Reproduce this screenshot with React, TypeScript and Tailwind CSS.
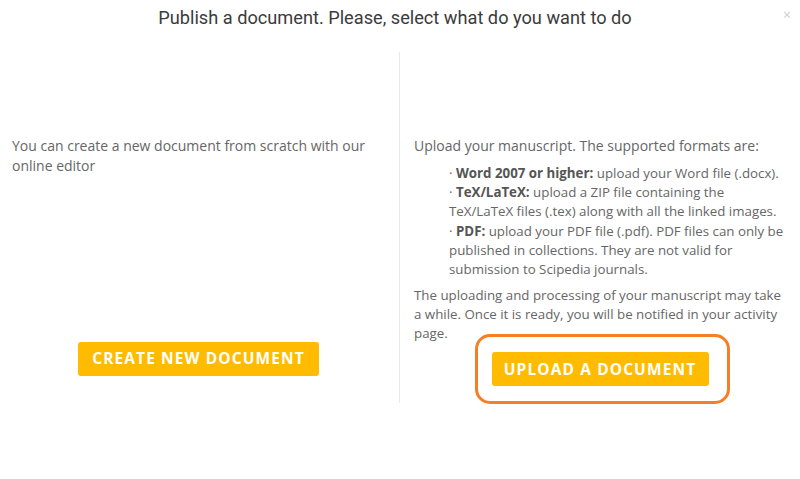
const body = { fontFamily: '"Open Sans", "Liberation Sans", sans-serif' }
const heading = { fontFamily: 'Roboto, "Open Sans", sans-serif' }

const formats = [
  { label: "Word 2007 or higher:", text: "upload your Word file (.docx)." },
  { label: "TeX/LaTeX:", text: "upload a ZIP file containing the TeX/LaTeX files (.tex) along with all the linked images." },
  {
    label: "PDF:",
    text: "upload your PDF file (.pdf). PDF files can only be published in collections. They are not valid for submission to Scipedia journals.",
  },
]

const ActionButton = ({ children, className = "" }: { children: React.ReactNode; className?: string }) => (
  <button
    type="button"
    className={`h-[34px] rounded-[3px] bg-[#ffbb00] text-[15.5px] font-bold uppercase tracking-[1.1px] text-white ${className}`}
    style={body}
  >
    {children}
  </button>
)

export default function App() {
  return (
    <div className="w-[800px] h-[479px] bg-white text-[14px] text-[#666]" style={body}>
      <div className="relative flex h-[52px] items-start justify-center pt-[4px]">
        <h1 className="text-[18.2px] font-normal text-[#3b3b3b] -ml-[10px]" style={heading}>
          Publish a document. Please, select what do you want to do
        </h1>
        <button type="button" className="absolute right-[9px] top-[8px] text-[14px] leading-none text-[#cfcfcf]">
          ×
        </button>
      </div>

      <div className="flex h-[351px]">
        <div className="flex w-[400px] flex-col border-r border-[#e8e8e8] pl-[12px] pr-[12px] pt-[84px]">
          <p className="leading-[20px]">You can create a new document from scratch with our online editor</p>
          <div className="mt-[166px] flex justify-center">
            <ActionButton className="w-[241px] -ml-[2px]">Create new document</ActionButton>
          </div>
        </div>

        <div className="flex w-[400px] flex-col pl-[14px] pr-[14px] pt-[84px]">
          <p className="leading-[20px]">Upload your manuscript. The supported formats are:</p>
          <div className="ml-[35px] mt-[8px] text-[13.3px] leading-[19.2px]">
            {formats.map((f) => (
              <div key={f.label}>
                · <b className="font-bold text-[#555]">{f.label}</b> {f.text}
              </div>
            ))}
          </div>
          <p className="mt-[7px] text-[13.3px] leading-[19px]">
            The uploading and processing of your manuscript may take a while. Once it is ready, you will be notified in
            your activity page.
          </p>
          <div className="mt-[9px] flex justify-center">
            <div className="relative">
              <ActionButton className="w-[217px]">Upload a document</ActionButton>
              <div className="pointer-events-none absolute -left-[17px] -right-[21px] -top-[18px] -bottom-[18px] rounded-[15px] border-[3px] border-[#f67e26]" />
            </div>
          </div>
        </div>
      </div>
    </div>
  )
}
